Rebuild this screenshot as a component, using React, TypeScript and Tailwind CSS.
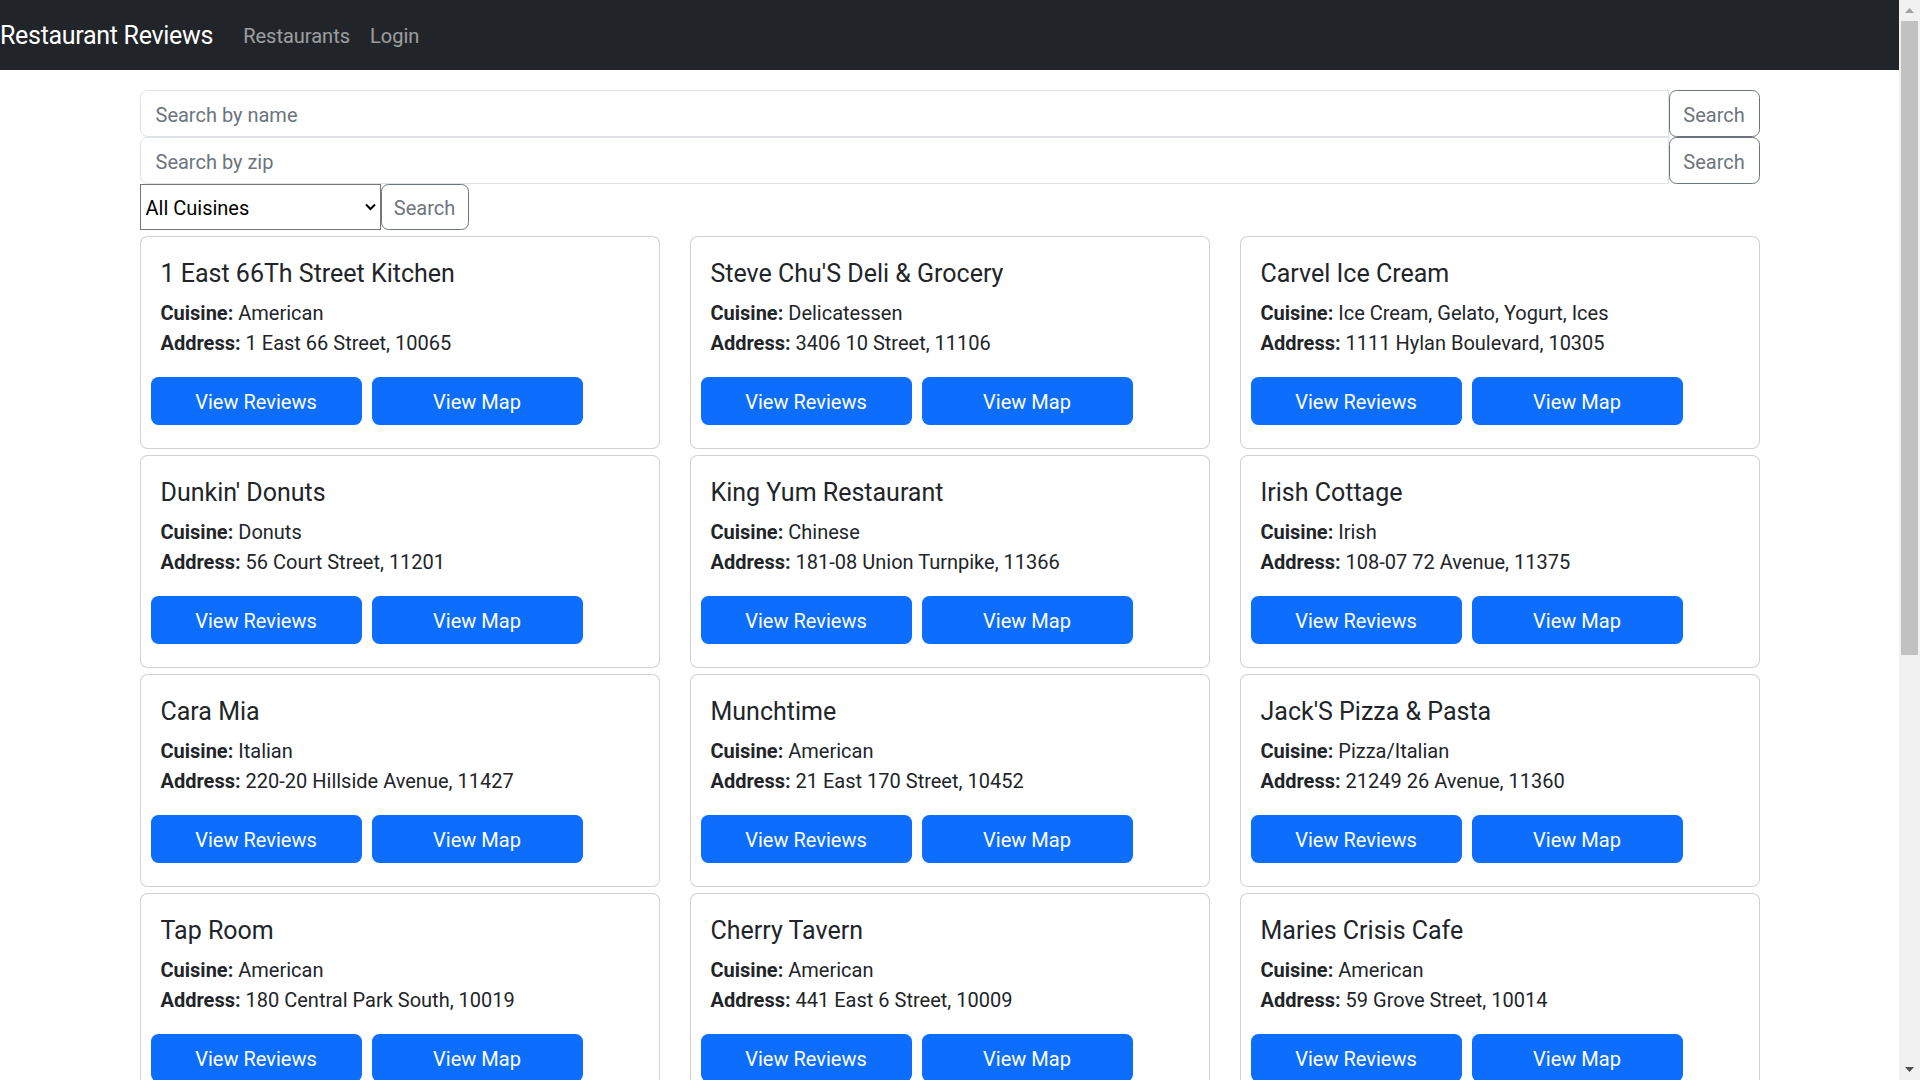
import React, { useState } from "react";

type restaurant = {
	id: string;
	name: string;
	cuisine: string;
	address: string;
};

const restaurants: restaurant[] = [
	{ id: "1", name: "1 East 66Th Street Kitchen", cuisine: "American", address: "1 East 66 Street, 10065" },
	{ id: "2", name: "Steve Chu'S Deli & Grocery", cuisine: "Delicatessen", address: "3406 10 Street, 11106" },
	{ id: "3", name: "Carvel Ice Cream", cuisine: "Ice Cream, Gelato, Yogurt, Ices", address: "1111 Hylan Boulevard, 10305" },
	{ id: "4", name: "Dunkin' Donuts", cuisine: "Donuts", address: "56 Court Street, 11201" },
	{ id: "5", name: "King Yum Restaurant", cuisine: "Chinese", address: "181-08 Union Turnpike, 11366" },
	{ id: "6", name: "Irish Cottage", cuisine: "Irish", address: "108-07 72 Avenue, 11375" },
	{ id: "7", name: "Cara Mia", cuisine: "Italian", address: "220-20 Hillside Avenue, 11427" },
	{ id: "8", name: "Munchtime", cuisine: "American", address: "21 East 170 Street, 10452" },
	{ id: "9", name: "Jack'S Pizza & Pasta", cuisine: "Pizza/Italian", address: "21249 26 Avenue, 11360" },
	{ id: "10", name: "Tap Room", cuisine: "American", address: "180 Central Park South, 10019" },
	{ id: "11", name: "Cherry Tavern", cuisine: "American", address: "441 East 6 Street, 10009" },
	{ id: "12", name: "Maries Crisis Cafe", cuisine: "American", address: "59 Grove Street, 10014" },
	{ id: "13", name: "Angelika Film Center", cuisine: "American", address: "18 West Houston Street, 10012" },
	{ id: "14", name: "Wendy'S", cuisine: "Hamburgers", address: "469 Flatbush Avenue, 11225" },
	{ id: "15", name: "Riviera Caterer", cuisine: "American", address: "2780 Stillwell Avenue, 11224" },
	{ id: "16", name: "Kosher Island", cuisine: "Jewish/Kosher", address: "2206 Victory Boulevard, 10314" },
	{ id: "17", name: "Regina Caterers", cuisine: "American", address: "6409 11 Avenue, 11219" },
	{ id: "18", name: "Wild Asia", cuisine: "American", address: "2300 Southern Boulevard, 10460" },
	{ id: "19", name: "Brunos On The Boulevard", cuisine: "American", address: "8825 Astoria Boulevard, 11369" },
	{ id: "20", name: "Tov Kosher Kitchen", cuisine: "Jewish/Kosher", address: "97-22 63 Road, 11374" },
];

const Scrollbar: React.FC = () => {
	return (
		<div className="flex h-full w-[21px] shrink-0 flex-col bg-[#f1f1f1]">
			<div className="flex h-[21px] items-center justify-center">
				<svg width="9" height="5" viewBox="0 0 9 5">
					<polygon points="4.5,0 9,5 0,5" fill="#a3a3a3" />
				</svg>
			</div>
			<div className="mx-[2px] h-[634px] bg-[#c1c1c1]" />
			<div className="flex-1" />
			<div className="flex h-[21px] items-center justify-center">
				<svg width="9" height="5" viewBox="0 0 9 5">
					<polygon points="0,0 9,0 4.5,5" fill="#505050" />
				</svg>
			</div>
		</div>
	);
};

const RestaurantCard: React.FC<{ item: restaurant }> = ({ item }) => {
	return (
		<div className="rounded-[7.5px] border border-black/[0.175] bg-white p-[20px]">
			<h5 className="mb-[9px] pt-[2px] text-[25px] font-normal leading-[1.2]">{item.name}</h5>
			<p className="mb-[19px] text-[20px] leading-[1.5]">
				<strong className="font-bold">Cuisine: </strong>
				{item.cuisine}
				<br />
				<strong className="font-bold">Address: </strong>
				{item.address}
			</p>
			<div className="-ml-[10px] mb-[3.5px] flex gap-[10px]">
				<button className="h-[47.5px] w-[211px] rounded-[7.5px] bg-[#0d6efd] pt-[2px] text-[20px] text-white">
					View Reviews
				</button>
				<button className="h-[47.5px] w-[211px] rounded-[7.5px] bg-[#0d6efd] pt-[2px] text-[20px] text-white">
					View Map
				</button>
			</div>
		</div>
	);
};

const App: React.FC = () => {
	const [searchName, setSearchName] = useState<string>("");
	const [searchZip, setSearchZip] = useState<string>("");
	const [cuisine, setCuisine] = useState<string>("All Cuisines");

	return (
		<div className="flex h-screen w-full overflow-hidden bg-white font-['Segoe_UI',Roboto,sans-serif] text-[20px] text-[#212529]">
			<div className="min-w-0 flex-1 overflow-hidden">
				<nav className="flex h-[70px] items-center bg-[#212529] pt-[2px]">
					<a href="#" className="mr-[20px] text-[25px] leading-[1.5] tracking-[-0.3px] text-white">
						Restaurant Reviews
					</a>
					<a href="#" className="px-[10px] text-[20px] leading-[1.5] text-white/55">
						Restaurants
					</a>
					<a href="#" className="px-[10px] text-[20px] leading-[1.5] text-white/55">
						Login
					</a>
				</nav>
				<div className="mx-auto w-[1650px] px-[15px] pt-[20px]">
					<div className="flex h-[47px]">
						<input
							type="text"
							className="min-w-0 flex-1 rounded-l-[7.5px] border border-[#dee2e6] px-[15px] pt-[2px] text-[20px] text-[#212529] placeholder:text-[#6c757d] focus:outline-none"
							placeholder="Search by name"
							value={searchName}
							onChange={(e: React.ChangeEvent<HTMLInputElement>) => setSearchName(e.target.value)}
						/>
						<button className="w-[91px] rounded-[7.5px] border border-[#6c757d] pt-[2px] text-[20px] text-[#6c757d]">
							Search
						</button>
					</div>
					<div className="flex h-[47px]">
						<input
							type="text"
							className="min-w-0 flex-1 rounded-l-[7.5px] border border-[#dee2e6] px-[15px] pt-[2px] text-[20px] text-[#212529] placeholder:text-[#6c757d] focus:outline-none"
							placeholder="Search by zip"
							value={searchZip}
							onChange={(e: React.ChangeEvent<HTMLInputElement>) => setSearchZip(e.target.value)}
						/>
						<button className="w-[91px] rounded-[7.5px] border border-[#6c757d] pt-[2px] text-[20px] text-[#6c757d]">
							Search
						</button>
					</div>
					<div className="flex h-[46px]">
						<div className="relative w-[241px]">
							<select
								className="h-full w-full appearance-none border border-[#767676] bg-white pl-[5px] pt-[2px] text-[20px] text-black focus:outline-none"
								value={cuisine}
								onChange={(e: React.ChangeEvent<HTMLSelectElement>) => setCuisine(e.target.value)}
							>
								<option value="All Cuisines">All Cuisines</option>
								<option value="American">American</option>
								<option value="Chinese">Chinese</option>
								<option value="Italian">Italian</option>
							</select>
							<svg
								className="pointer-events-none absolute right-[5px] top-[19px]"
								width="11"
								height="8"
								viewBox="0 0 11 8"
							>
								<path d="M1 1.5 L5.5 6 L10 1.5" fill="none" stroke="#000" strokeWidth="2" />
							</svg>
						</div>
						<button className="w-[88px] rounded-[7.5px] border border-[#6c757d] pt-[2px] text-[20px] text-[#6c757d]">
							Search
						</button>
					</div>
					<div className="mt-[6px] grid grid-cols-3 gap-x-[30px] gap-y-[6px]">
						{restaurants.map((item) => (
							<RestaurantCard key={item.id} item={item} />
						))}
					</div>
				</div>
			</div>
			<Scrollbar />
		</div>
	);
};

export default App;
